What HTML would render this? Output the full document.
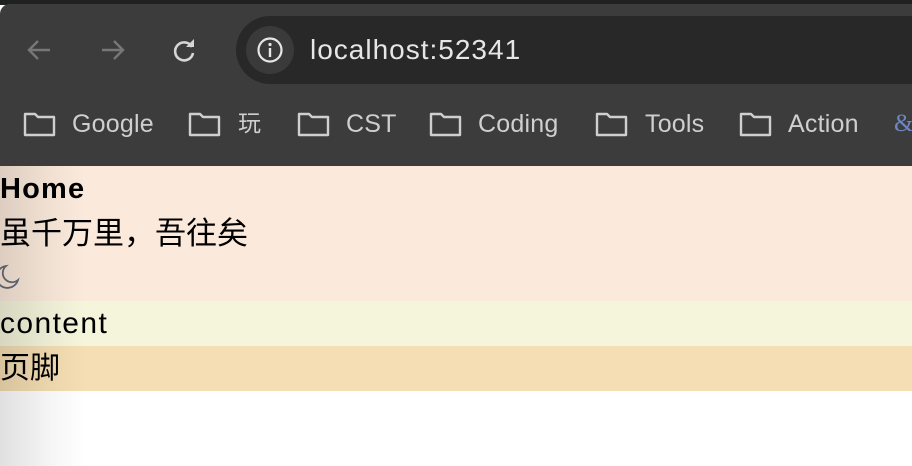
<!DOCTYPE html>
<html><head><meta charset="utf-8"><style>
*{margin:0;padding:0;box-sizing:border-box}
html,body{width:912px;height:466px;overflow:hidden;background:#fff;font-family:"Liberation Sans","Noto Sans CJK SC",sans-serif}
.top{position:absolute;left:0;top:0;width:912px;height:5px;background:#1f2020}
.bar{position:absolute;left:0;top:4px;width:912px;height:162px;background:#3c3c3c;border-top-left-radius:10px}
.addr{position:absolute;left:236px;top:16px;width:720px;height:68px;background:#282828;border-radius:34px}
.info{position:absolute;left:246px;top:26px;width:48px;height:48px;border-radius:24px;background:#3a3a3a}
.url{position:absolute;left:310px;top:33px;font-size:28px;line-height:34px;color:#e6e6e6;letter-spacing:1px}
.nav{position:absolute}
.bm{position:absolute;top:108px;font-size:25px;line-height:32px;color:#cfcfcf;letter-spacing:0.2px}
.page{position:absolute;left:0;top:166px;width:912px}
.h{background:#fbeadb;height:135px}
.c{background:#f5f5dc;height:45px;font-size:30px;line-height:45px;letter-spacing:1.4px}
.f{background:#f5deb3;height:45px;font-size:30px;line-height:45px}
.l{height:45px;line-height:46px;font-size:27px;color:#000}
.shade{position:absolute;left:0;top:166px;width:85px;height:300px;background:linear-gradient(to right,rgba(0,0,0,0.12),rgba(0,0,0,0.04) 60%,rgba(0,0,0,0))}
</style></head><body>
<div class="top"></div>
<div class="bar"></div>
<svg class="nav" style="left:24px;top:34px" width="32" height="32" viewBox="0 0 32 32"><path d="M26 16H6M14 7l-9 9 9 9" fill="none" stroke="#777" stroke-width="2.4"/></svg>
<svg class="nav" style="left:96px;top:34px" width="32" height="32" viewBox="0 0 32 32"><path d="M6 16h20M18 7l9 9-9 9" fill="none" stroke="#777" stroke-width="2.4"/></svg>
<svg class="nav" style="left:168px;top:34px" width="32" height="32" viewBox="0 0 32 32"><path d="M24 13A9 9 0 1 0 25 19" fill="none" stroke="#d6d6d6" stroke-width="2.6"/><path d="M18 13h8V5z" fill="#d6d6d6"/></svg>
<div class="addr"></div>
<div class="info"></div>
<svg class="nav" style="left:256px;top:36px" width="28" height="28" viewBox="0 0 28 28"><circle cx="14" cy="14" r="11.5" fill="none" stroke="#e6e6e6" stroke-width="2.2"/><rect x="12.8" y="12" width="2.4" height="9" fill="#e6e6e6"/><circle cx="14" cy="8.5" r="1.6" fill="#e6e6e6"/></svg>
<div class="url">localhost:52341</div>
<svg class="nav" style="left:22px;top:110px" width="36" height="28" viewBox="0 0 36 28"><path d="M3 4h10l3 3h16v18H3z" fill="none" stroke="#cfcfcf" stroke-width="2.4" stroke-linejoin="round"/></svg><div class="bm" style="left:72px">Google</div>
<svg class="nav" style="left:187px;top:110px" width="36" height="28" viewBox="0 0 36 28"><path d="M3 4h10l3 3h16v18H3z" fill="none" stroke="#cfcfcf" stroke-width="2.4" stroke-linejoin="round"/></svg><div class="bm" style="left:238px;font-size:23px;top:107px">玩</div>
<svg class="nav" style="left:296px;top:110px" width="36" height="28" viewBox="0 0 36 28"><path d="M3 4h10l3 3h16v18H3z" fill="none" stroke="#cfcfcf" stroke-width="2.4" stroke-linejoin="round"/></svg><div class="bm" style="left:346px">CST</div>
<svg class="nav" style="left:428px;top:110px" width="36" height="28" viewBox="0 0 36 28"><path d="M3 4h10l3 3h16v18H3z" fill="none" stroke="#cfcfcf" stroke-width="2.4" stroke-linejoin="round"/></svg><div class="bm" style="left:478px">Coding</div>
<svg class="nav" style="left:594px;top:110px" width="36" height="28" viewBox="0 0 36 28"><path d="M3 4h10l3 3h16v18H3z" fill="none" stroke="#cfcfcf" stroke-width="2.4" stroke-linejoin="round"/></svg><div class="bm" style="left:645px">Tools</div>
<svg class="nav" style="left:738px;top:110px" width="36" height="28" viewBox="0 0 36 28"><path d="M3 4h10l3 3h16v18H3z" fill="none" stroke="#cfcfcf" stroke-width="2.4" stroke-linejoin="round"/></svg><div class="bm" style="left:788px">Action</div>
<div class="bm" style="left:894px;color:#6f86c0;font-family:'Liberation Serif',serif">&amp;</div>
<div class="page">
<div class="h">
<div class="l" style="font-weight:bold;font-size:29px;letter-spacing:1.2px">Home</div>
<div class="l" style="font-size:31px">虽千万里，吾往矣</div>
<div class="l"><svg width="24" height="28" viewBox="0 0 24 28" style="margin-top:8px"><path d="M9 2A11 11 0 1 0 21 16A8.5 8.5 0 0 1 9 2z" fill="none" stroke="#666d78" stroke-width="1.8" transform="translate(-3,0)"/></svg></div>
</div>
<div class="c">content</div>
<div class="f">页脚</div>
</div>
<div class="shade"></div>
</body></html>
